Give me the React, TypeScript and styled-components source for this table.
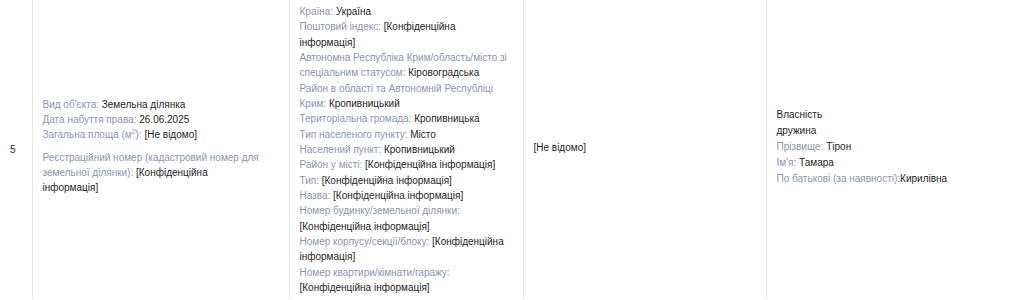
import React from "react";
import styled, { createGlobalStyle } from "styled-components";

type Field = { label: React.ReactNode; value: string; tight?: boolean };

const address: Field[] = [
  { label: "Країна", value: "Україна" },
  { label: "Поштовий індекс", value: "[Конфіденційна інформація]" },
  {
    label: "Автономна Республіка Крим/область/місто зі спеціальним статусом",
    value: "Кіровоградська",
  },
  {
    label: "Район в області та Автономній Республіці Крим",
    value: "Кропивницький",
  },
  { label: "Територіальна громада", value: "Кропивницька" },
  { label: "Тип населеного пункту", value: "Місто" },
  { label: "Населений пункт", value: "Кропивницький" },
  { label: "Район у місті", value: "[Конфіденційна інформація]" },
  { label: "Тип", value: "[Конфіденційна інформація]" },
  { label: "Назва", value: "[Конфіденційна інформація]" },
  {
    label: "Номер будинку/земельної ділянки",
    value: "[Конфіденційна інформація]",
  },
  { label: "Номер корпусу/секції/блоку", value: "[Конфіденційна інформація]" },
  {
    label: "Номер квартири/кімнати/гаражу",
    value: "[Конфіденційна інформація]",
  },
];

const owner: Field[] = [
  { label: "Прізвище", value: "Тірон" },
  { label: "Ім'я", value: "Тамара" },
  { label: "По батькові (за наявності)", value: "Кирилівна", tight: true },
];

export default function App() {
  return (
    <>
      <GlobalStyle />
      <Table>
        <colgroup>
          <col style={{ width: 32 }} />
          <col style={{ width: 257 }} />
          <col style={{ width: 234 }} />
          <col style={{ width: 243 }} />
          <col />
        </colgroup>
        <tbody>
          <tr>
            <NumCell>5</NumCell>
            <Cell $padRight={25}>
              <Block>
                <Line>
                  <Label>Вид об'єкта: </Label>
                  <Value>Земельна ділянка</Value>
                </Line>
                <Line>
                  <Label>Дата набуття права: </Label>
                  <Value>26.06.2025</Value>
                </Line>
                <Line>
                  <Label>
                    Загальна площа (м<sup>2</sup>):{" "}
                  </Label>
                  <Value>[Не відомо]</Value>
                </Line>
              </Block>
              <Block>
                <Line>
                  <Label>
                    Реєстраційний номер (кадастровий номер для земельної
                    ділянки):{" "}
                  </Label>
                  <Value>[Конфіденційна інформація]</Value>
                </Line>
              </Block>
            </Cell>
            <Cell $padRight={10}>
              {address.map((f, i) => (
                <Line key={i}>
                  <Label>{f.label}: </Label>
                  <Value>{f.value}</Value>
                </Line>
              ))}
            </Cell>
            <Cell>
              <Block $gap={4}>
                <Value>[Не відомо]</Value>
              </Block>
            </Cell>
            <Cell>
              <Block $gap={5} $lh={16.2}>
                <Line>
                  <Value>Власність</Value>
                </Line>
                <Line>
                  <Value>дружина</Value>
                </Line>
                {owner.map((f, i) => (
                  <Line key={i}>
                    <Label>
                      {f.label}:{f.tight ? "" : " "}
                    </Label>
                    <Value>{f.value}</Value>
                  </Line>
                ))}
              </Block>
            </Cell>
          </tr>
        </tbody>
      </Table>
    </>
  );
}

const GlobalStyle = createGlobalStyle`
  body {
    margin: 0;
    background: #ffffff;
    overflow: hidden;
    font-family: "Liberation Sans", Arial, sans-serif;
  }
`;

const Table = styled.table`
  width: 1060px;
  border-collapse: collapse;
  table-layout: fixed;
  font-size: 10px;
  line-height: 15.33px;
  color: #1e1e1e;
`;

const Cell = styled.td<{ $padRight?: number }>`
  vertical-align: middle;
  padding: 4px ${(p) => p.$padRight ?? 10}px 4px 10px;
  border-left: 1px solid #e6e6eb;
`;

const NumCell = styled.td`
  vertical-align: middle;
  padding: 0 0 0 10px;
  font-size: 10px;
  color: #1e1e1e;
`;

const Block = styled.div<{ $gap?: number; $lh?: number }>`
  margin-bottom: ${(p) => p.$gap ?? 7}px;
  line-height: ${(p) => (p.$lh ? `${p.$lh}px` : "inherit")};
`;

const Line = styled.div``;

const Label = styled.span`
  color: #8a95b0;

  sup {
    font-size: 7px;
    line-height: 0;
    vertical-align: 4px;
  }
`;

const Value = styled.span`
  color: #1e1e1e;
`;
